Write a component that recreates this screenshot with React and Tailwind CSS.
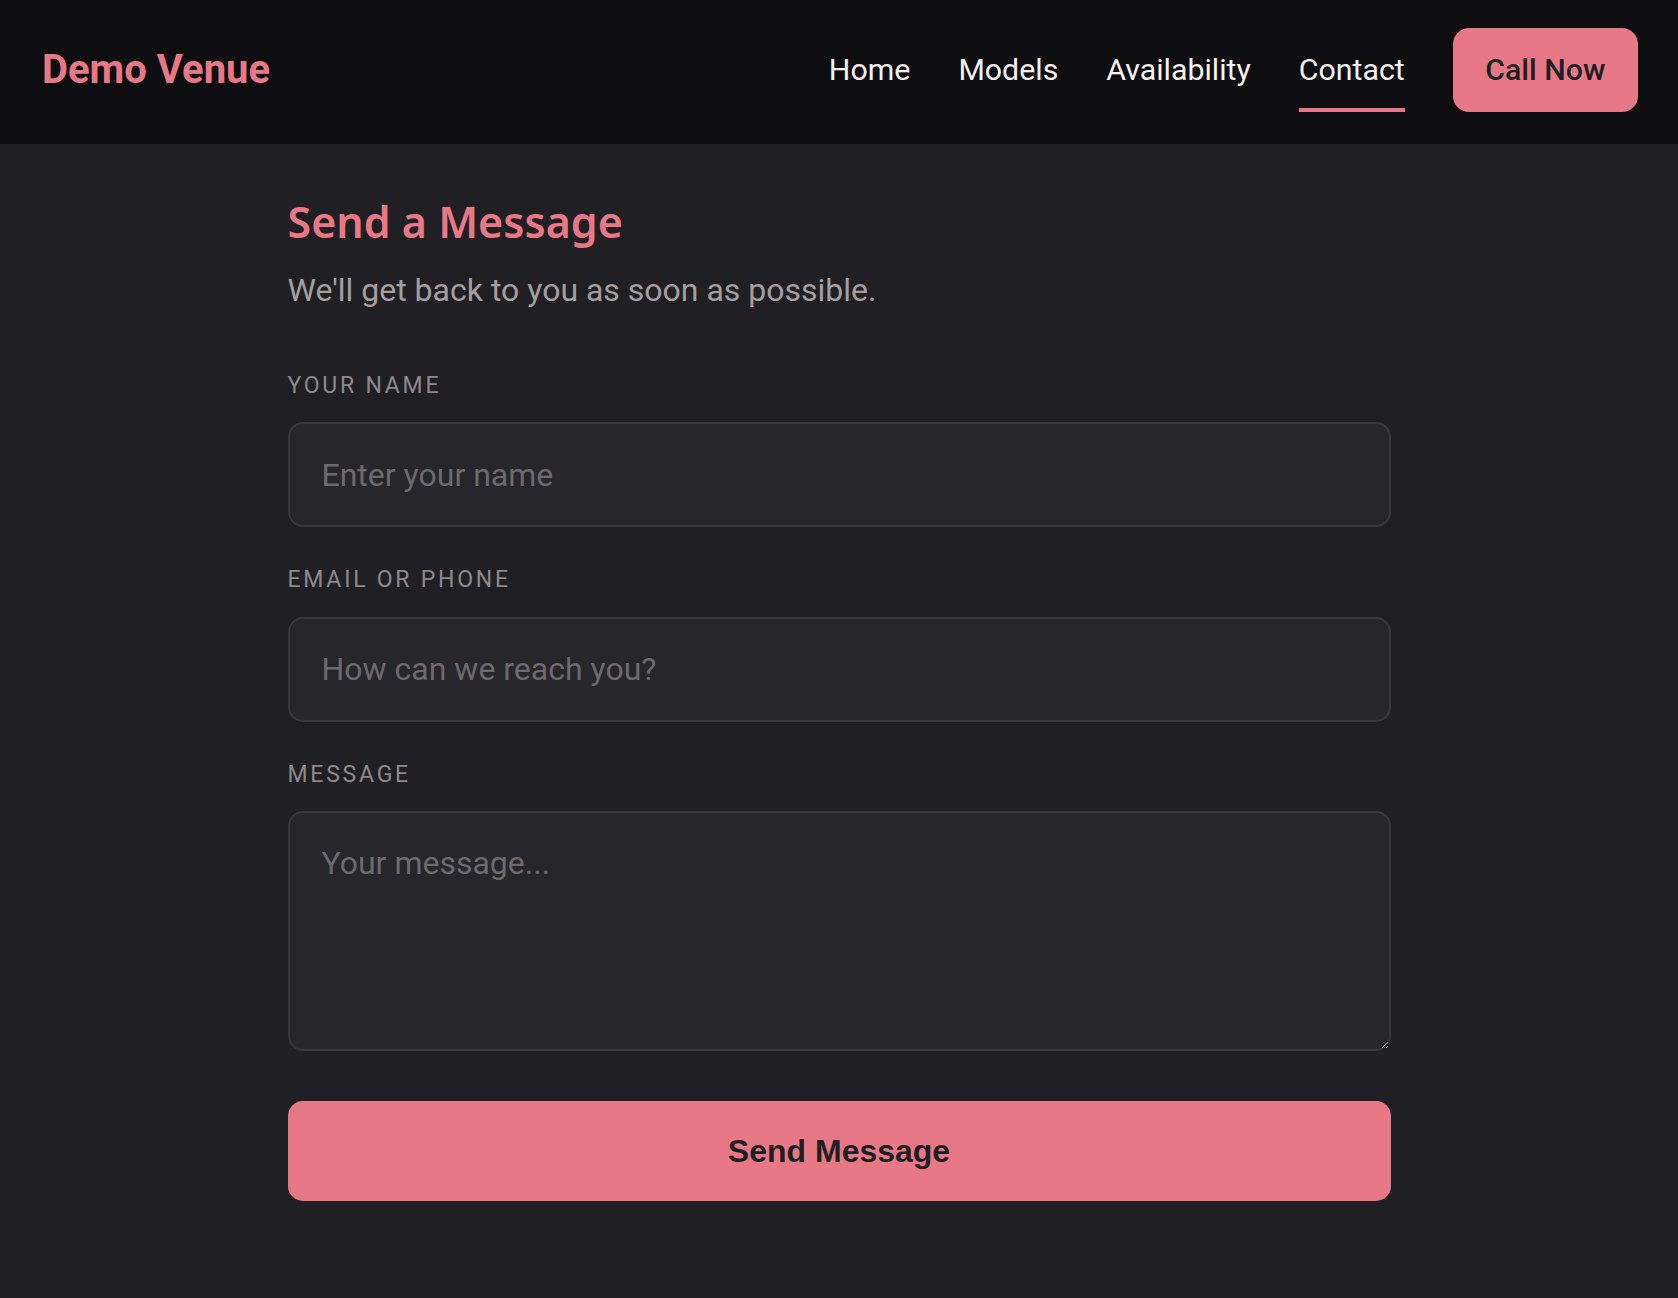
import { useState } from 'react';

const navLinks = ['Home', 'Models', 'Availability', 'Contact'];

function Field({ label, children }) {
  return (
    <div className="flex flex-col">
      <label className="mb-[19px] block text-[23px] font-normal uppercase leading-[1.5] tracking-[0.12em] text-[#8d898b]">
        {label}
      </label>
      {children}
    </div>
  );
}

const inputCls =
  'block w-full rounded-[15px] border-2 border-[#38383d] bg-[#26262b] px-[32px] text-[32px] leading-[1.5] text-[#eeeaea] placeholder:text-[#6c6a6e] outline-none focus:border-[#e87886]';

export default function App() {
  const [active] = useState('Contact');

  return (
    <div className="min-h-screen bg-[#202024] font-['Roboto',sans-serif]">
      <header className="flex h-[144px] items-center justify-between bg-[#0e0e10] pl-[42px] pr-[40px] pb-[4px]">
        <a href="#" className="text-[40px] font-bold leading-none text-[#e87886]">
          Demo Venue
        </a>
        <nav className="flex items-center gap-[48px]">
          {navLinks.map((l) => (
            <a
              key={l}
              href="#"
              className={
                'flex h-[84px] items-center border-b-4 pt-[4px] text-[30.3px] leading-none text-[#f6f1f1] ' +
                (l === active ? 'border-[#e87886]' : 'border-transparent')
              }
            >
              {l}
            </a>
          ))}
          <a
            href="#"
            className="flex h-[84px] items-center rounded-[16px] bg-[#e87886] px-[32.5px] text-[30.3px] font-medium leading-none text-[#1f1f23]"
          >
            Call Now
          </a>
        </nav>
      </header>

      <main className="mx-auto w-[1103px] pt-[52px] pb-[98px]">
        <h1 className="font-['Noto_Sans',sans-serif] text-[43px] font-semibold leading-[1.2] text-[#e87886]">
          Send a Message
        </h1>
        <p className="mt-[18px] text-[32px] leading-[1.5] text-[#a49e9f]">
          We'll get back to you as soon as possible.
        </p>

        <form className="mt-[55px] flex flex-col gap-[36px]" onSubmit={(e) => e.preventDefault()}>
          <Field label="Your Name">
            <input type="text" placeholder="Enter your name" className={inputCls + ' h-[105px]'} />
          </Field>
          <Field label="Email or Phone">
            <input type="text" placeholder="How can we reach you?" className={inputCls + ' h-[105px]'} />
          </Field>
          <Field label="Message">
            <textarea
              placeholder="Your message..."
              className={inputCls + ' h-[240px] resize-y py-[26px]'}
            />
          </Field>
          <button
            type="submit"
            className="mt-[14px] h-[100px] w-full rounded-[15px] bg-[#e87886] font-['Liberation_Sans',Arial,sans-serif] text-[32px] font-bold text-[#1f1f23]"
          >
            Send Message
          </button>
        </form>
      </main>
    </div>
  );
}
